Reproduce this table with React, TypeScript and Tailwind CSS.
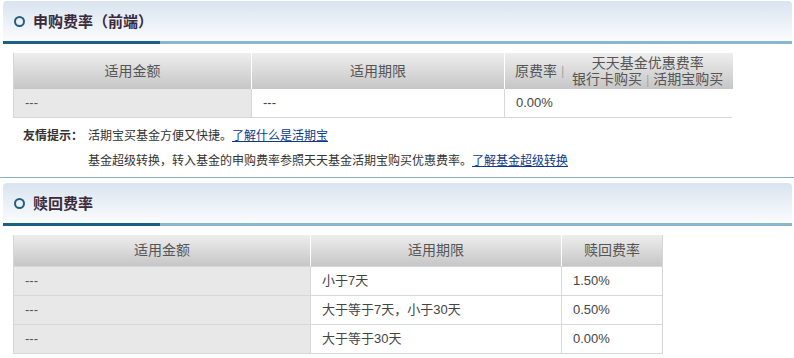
import React from "react";

function SectionHeader({ title }: { title: string }) {
  return (
    <div className="ml-[3px] w-[789px]">
      <div className="h-[40px] rounded-t-[4px] bg-linear-to-b from-[#d9e4f0] to-[#fbfcfe] flex items-center pl-[11px]">
        <span className="w-[11px] h-[11px] rounded-full border-2 border-[#285c80] box-border" />
        <span className="ml-[8px] text-[15px] leading-[18px] font-bold text-[#3a2a3a] mt-[2px]">{title}</span>
      </div>
      <div className="flex h-[3px]">
        <div className="w-[157px] bg-[#1b5f87]" />
        <div className="flex-1 bg-[#8ab6d2]" />
      </div>
    </div>
  );
}

const th = "bg-linear-to-b from-[#eeeeee] to-[#c6c6c6] text-[#555] text-[14px] flex items-center justify-center";
const c1 = "bg-[#e8e8e8] text-[#555] text-[13px] flex items-center pl-[11px]";
const cw = "bg-white text-[#444] text-[13px] flex items-center pl-[11px]";

export default function App() {
  return (
    <div className="w-[794px] h-[358px] bg-white font-['Liberation_Sans','Noto_Sans_CJK_SC',sans-serif] overflow-hidden">
      <div className="pt-[1px] border-b border-[#8aaec4] pb-[8px] w-[794px]">
        <SectionHeader title="申购费率（前端）" />
        <div className="ml-[13px] mt-[9px] w-[719px] border border-[#d6d6d6] border-t-0 grid grid-cols-[237px_252px_228px] grid-rows-[36px_28px] gap-x-px bg-[#d8d8d8]">
          <div className={th}>适用金额</div>
          <div className={`${th} border-l border-white -ml-px`}>适用期限</div>
          <div className={`${th} justify-start pl-[10px] border-l border-white -ml-px`}>
            <span>原费率</span>
            <span className="ml-[4px] text-[#a8a8a8] text-[13px]">|</span>
            <div className="flex-1 flex flex-col items-center leading-[16px] mr-[2px]">
              <span>天天基金优惠费率</span>
              <span>
                银行卡购买 <span className="text-[#a8a8a8] text-[13px]">|</span> 活期宝购买
              </span>
            </div>
          </div>
          <div className={c1}>---</div>
          <div className={cw}>---</div>
          <div className={cw}>0.00%</div>
        </div>
        <div className="mt-[10px] text-[12px] text-[#333] leading-[16px]">
          <div className="flex pl-[23px]">
            <span className="font-bold w-[65px] shrink-0">友情提示：</span>
            <span>
              活期宝买基金方便又快捷。
              <a className="text-[#0c3a8a] underline">了解什么是活期宝</a>
            </span>
          </div>
          <div className="pl-[88px] mt-[9px]">
            基金超级转换，转入基金的申购费率参照天天基金活期宝购买优惠费率。
            <a className="text-[#0c3a8a] underline">了解基金超级转换</a>
          </div>
        </div>
      </div>
      <div className="pt-[5px]">
        <SectionHeader title="赎回费率" />
        <div className="ml-[13px] mt-[9px] w-[650px] border border-[#d6d6d6] border-t-0 grid grid-cols-[296px_250px_100px] grid-rows-[31px_28px_28px_28px] gap-x-px gap-y-px bg-[#d8d8d8]">
          <div className={th}>适用金额</div>
          <div className={`${th} border-l border-white -ml-px`}>适用期限</div>
          <div className={`${th} border-l border-white -ml-px`}>赎回费率</div>
          <div className={c1}>---</div>
          <div className={cw}>小于7天</div>
          <div className={cw}>1.50%</div>
          <div className={c1}>---</div>
          <div className={cw}>大于等于7天，小于30天</div>
          <div className={cw}>0.50%</div>
          <div className={c1}>---</div>
          <div className={cw}>大于等于30天</div>
          <div className={cw}>0.00%</div>
        </div>
      </div>
    </div>
  );
}
